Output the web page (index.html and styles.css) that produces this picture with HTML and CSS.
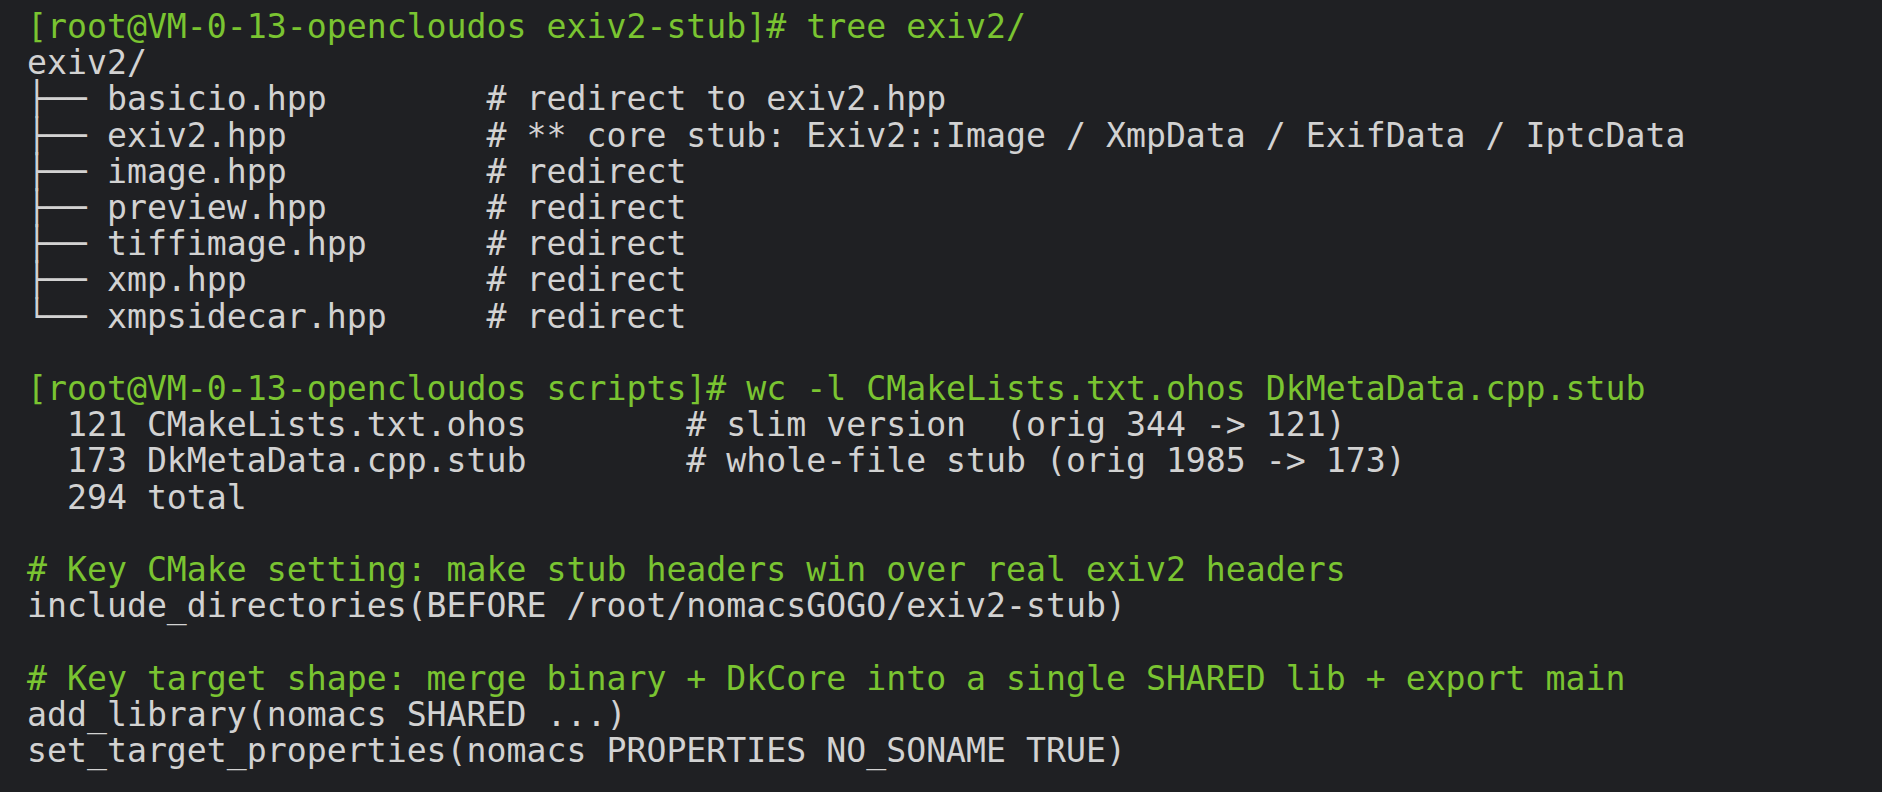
FILE: index.html
```html
<!DOCTYPE html>
<html>
<head>
<meta charset="utf-8">
<link rel="stylesheet" href="styles.css">
</head>
<body>
<pre class="term"><span class="g">[root@VM-0-13-opencloudos exiv2-stub]# tree exiv2/</span>
exiv2/
├── basicio.hpp        # redirect to exiv2.hpp
├── exiv2.hpp          # ** core stub: Exiv2::Image / XmpData / ExifData / IptcData
├── image.hpp          # redirect
├── preview.hpp        # redirect
├── tiffimage.hpp      # redirect
├── xmp.hpp            # redirect
└── xmpsidecar.hpp     # redirect

<span class="g">[root@VM-0-13-opencloudos scripts]# wc -l CMakeLists.txt.ohos DkMetaData.cpp.stub</span>
  121 CMakeLists.txt.ohos        # slim version  (orig 344 -> 121)
  173 DkMetaData.cpp.stub        # whole-file stub (orig 1985 -> 173)
  294 total

<span class="g"># Key CMake setting: make stub headers win over real exiv2 headers</span>
include_directories(BEFORE /root/nomacsGOGO/exiv2-stub)

<span class="g"># Key target shape: merge binary + DkCore into a single SHARED lib + export main</span>
add_library(nomacs SHARED ...)
set_target_properties(nomacs PROPERTIES NO_SONAME TRUE)</pre>
</body>
</html>
```

FILE: styles.css
```css
html, body {
  margin: 0;
  padding: 0;
  background: #1f2023;
  height: 100%;
}
.term {
  margin: 0;
  padding: 9px 0 0 27px;
  font-family: "DejaVu Sans Mono", monospace;
  font-size: 33.2px;
  line-height: 36.2px;
  color: #d2d2d2;
  white-space: pre;
}
.g {
  color: #7ac431;
}
```
